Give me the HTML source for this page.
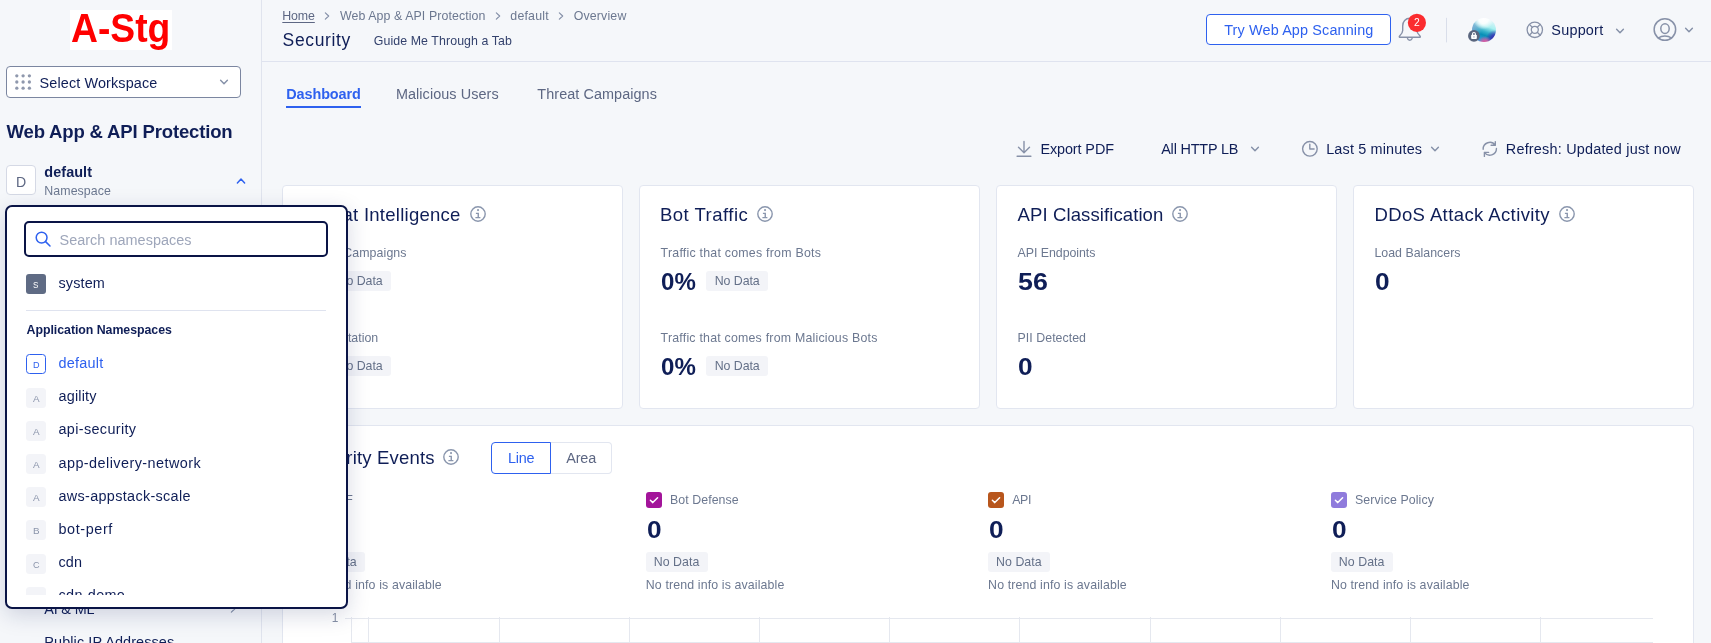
<!DOCTYPE html>
<html lang="en"><head><meta charset="utf-8"><title>Security Dashboard</title>
<style>
*{box-sizing:border-box;margin:0;padding:0}
html,body{width:1711px;height:643px;overflow:hidden;background:#f5f7fa;font-family:"Liberation Sans",sans-serif;}
.a{position:absolute;display:block}
.t{position:absolute;white-space:nowrap;display:block}
.layer{position:absolute;left:0;top:0;width:1711px;height:643px;overflow:hidden;will-change:transform}
.card{position:absolute;background:#fff;border:1px solid #e2e6f0;border-radius:4px}
.nd{background:#f3f4f8;border-radius:3px}
.nsb{position:absolute;width:19.8px;height:19.7px;border-radius:3.5px;background:#f3f4f8}
</style></head><body>

<main class="layer">
<div class="a" style="left:286px;top:106px;width:75px;height:2px;background:#2e61ef"></div>

<svg class="a" style="left:1248.8px;top:142.5px" width="12" height="12" viewBox="-6 -6 12 12"><path d="M-3.4 -1.8L0 1.8L3.4 -1.8" fill="none" stroke="#8590a8" stroke-width="1.4" stroke-linecap="round" stroke-linejoin="round"/></svg>

<svg class="a" style="left:1429px;top:142.5px" width="12" height="12" viewBox="-6 -6 12 12"><path d="M-3.4 -1.8L0 1.8L3.4 -1.8" fill="none" stroke="#8590a8" stroke-width="1.4" stroke-linecap="round" stroke-linejoin="round"/></svg>
<svg class="a" style="left:1010px;top:135px" width="500" height="28" viewBox="1010 135 500 28" fill="none" stroke="#8791a8" stroke-width="1.4" stroke-linecap="round" stroke-linejoin="round">
<path d="M1024 141.4V152.6M1018.5 147.2L1024 152.7L1029.5 147.2M1017.1 156.2H1030.9"/>
<circle cx="1309.9" cy="148.85" r="7.3"/><path d="M1309.8 144.2V149H1314.1"/>
<path d="M1483.15 149.3A6.65 6.65 0 0 1 1495.3 145.3M1495.3 141.6V145.3H1491.1"/><path d="M1496.45 148.5A6.65 6.65 0 0 1 1484.4 152.4M1484.4 156.4V152.4H1488.6"/>
</svg>
<div class="card" style="left:282px;top:185px;width:341px;height:224px"></div><div class="card" style="left:639px;top:185px;width:341px;height:224px"></div><div class="card" style="left:996px;top:185px;width:341px;height:224px"></div><div class="card" style="left:1353px;top:185px;width:341px;height:224px"></div>
<div class="card" style="left:282px;top:425px;width:1412px;height:240px"></div>
<div class="a" style="left:550px;top:442px;width:62px;height:32px;border:1px solid #e2e6f0;border-left:none;border-radius:0 4px 4px 0;background:#fff"></div>
<div class="a" style="left:491px;top:442px;width:60px;height:32px;border:1px solid #2e61ef;border-radius:4px 0 0 4px;background:#fff"></div>
<svg class="a" style="left:469.4px;top:204.85px" width="18" height="18" viewBox="-9 -9 18 18"><circle cx="0" cy="0" r="7.2" fill="none" stroke="#8a96ad" stroke-width="1.4"/><circle cx="0.05" cy="-3.9" r="1.05" fill="#8a96ad"/><path d="M-2.1 -0.65H0.25V3.6M-2.6 3.65H2.4" fill="none" stroke="#8a96ad" stroke-width="1.4"/></svg><svg class="a" style="left:755.8px;top:204.85px" width="18" height="18" viewBox="-9 -9 18 18"><circle cx="0" cy="0" r="7.2" fill="none" stroke="#8a96ad" stroke-width="1.4"/><circle cx="0.05" cy="-3.9" r="1.05" fill="#8a96ad"/><path d="M-2.1 -0.65H0.25V3.6M-2.6 3.65H2.4" fill="none" stroke="#8a96ad" stroke-width="1.4"/></svg><svg class="a" style="left:1170.8px;top:204.85px" width="18" height="18" viewBox="-9 -9 18 18"><circle cx="0" cy="0" r="7.2" fill="none" stroke="#8a96ad" stroke-width="1.4"/><circle cx="0.05" cy="-3.9" r="1.05" fill="#8a96ad"/><path d="M-2.1 -0.65H0.25V3.6M-2.6 3.65H2.4" fill="none" stroke="#8a96ad" stroke-width="1.4"/></svg><svg class="a" style="left:1557.8px;top:204.85px" width="18" height="18" viewBox="-9 -9 18 18"><circle cx="0" cy="0" r="7.2" fill="none" stroke="#8a96ad" stroke-width="1.4"/><circle cx="0.05" cy="-3.9" r="1.05" fill="#8a96ad"/><path d="M-2.1 -0.65H0.25V3.6M-2.6 3.65H2.4" fill="none" stroke="#8a96ad" stroke-width="1.4"/></svg><svg class="a" style="left:442.2px;top:448.2px" width="18" height="18" viewBox="-9 -9 18 18"><circle cx="0" cy="0" r="7.2" fill="none" stroke="#8a96ad" stroke-width="1.4"/><circle cx="0.05" cy="-3.9" r="1.05" fill="#8a96ad"/><path d="M-2.1 -0.65H0.25V3.6M-2.6 3.65H2.4" fill="none" stroke="#8a96ad" stroke-width="1.4"/></svg><div class="a nd" style="left:329.2px;top:271.2px;width:61.5px;height:19.5px"></div><div class="a nd" style="left:329.2px;top:356.2px;width:61.5px;height:19.5px"></div><div class="a nd" style="left:706.4px;top:271.2px;width:61.5px;height:19.5px"></div><div class="a nd" style="left:706.4px;top:356.2px;width:61.5px;height:19.5px"></div><div class="a nd" style="left:303.4px;top:552px;width:61.5px;height:19.5px"></div><div class="a nd" style="left:646.0px;top:552px;width:61.5px;height:19.5px"></div><div class="a nd" style="left:988.3000000000001px;top:552px;width:61.5px;height:19.5px"></div><div class="a nd" style="left:1331.1000000000001px;top:552px;width:61.5px;height:19.5px"></div><svg class="a" style="left:303.0px;top:492px" width="16" height="16" viewBox="0 0 16 16"><rect x="0" y="0" width="16" height="16" rx="3" fill="#0e5fd8"/><path d="M4.4 8.3l2.4 2.3 4.8-4.9" fill="none" stroke="#fff" stroke-width="1.5" stroke-linecap="round" stroke-linejoin="round"/></svg><svg class="a" style="left:645.5999999999999px;top:492px" width="16" height="16" viewBox="0 0 16 16"><rect x="0" y="0" width="16" height="16" rx="3" fill="#a3149a"/><path d="M4.4 8.3l2.4 2.3 4.8-4.9" fill="none" stroke="#fff" stroke-width="1.5" stroke-linecap="round" stroke-linejoin="round"/></svg><svg class="a" style="left:987.9px;top:492px" width="16" height="16" viewBox="0 0 16 16"><rect x="0" y="0" width="16" height="16" rx="3" fill="#b8561c"/><path d="M4.4 8.3l2.4 2.3 4.8-4.9" fill="none" stroke="#fff" stroke-width="1.5" stroke-linecap="round" stroke-linejoin="round"/></svg><svg class="a" style="left:1330.7px;top:492px" width="16" height="16" viewBox="0 0 16 16"><rect x="0" y="0" width="16" height="16" rx="3" fill="#8f7bdc"/><path d="M4.4 8.3l2.4 2.3 4.8-4.9" fill="none" stroke="#fff" stroke-width="1.5" stroke-linecap="round" stroke-linejoin="round"/></svg>
<div class="a" style="left:345px;top:618px;width:1308px;height:1px;background:#e5e8ef"></div>
<div class="a" style="left:351px;top:617px;width:1px;height:30px;background:#e5e8ef"></div><div class="a" style="left:368px;top:617px;width:1px;height:30px;background:#e5e8ef"></div><div class="a" style="left:499px;top:617px;width:1px;height:30px;background:#e5e8ef"></div><div class="a" style="left:629px;top:617px;width:1px;height:30px;background:#e5e8ef"></div><div class="a" style="left:759px;top:617px;width:1px;height:30px;background:#e5e8ef"></div><div class="a" style="left:889px;top:617px;width:1px;height:30px;background:#e5e8ef"></div><div class="a" style="left:1019px;top:617px;width:1px;height:30px;background:#e5e8ef"></div><div class="a" style="left:1150px;top:617px;width:1px;height:30px;background:#e5e8ef"></div><div class="a" style="left:1280px;top:617px;width:1px;height:30px;background:#e5e8ef"></div><div class="a" style="left:1410px;top:617px;width:1px;height:30px;background:#e5e8ef"></div><div class="a" style="left:1540px;top:617px;width:1px;height:30px;background:#e5e8ef"></div><div class="a" style="left:351px;top:642px;width:1302px;height:1px;background:#e5e8ef"></div>
<span class="t" style="left:286.2px;top:86px;font-size:14.42px;line-height:16px;color:#2e61ef;font-weight:700;letter-spacing:-0.072px;">Dashboard</span>
<span class="t" style="left:395.9px;top:86px;font-size:14.42px;line-height:16px;color:#5d6783;letter-spacing:0.075px;">Malicious Users</span>
<span class="t" style="left:537.3px;top:86px;font-size:14.42px;line-height:16px;color:#5d6783;letter-spacing:0.074px;">Threat Campaigns</span>
<span class="t" style="left:1040.4px;top:141px;font-size:14.42px;line-height:16px;color:#0f1e57;letter-spacing:-0.095px;">Export PDF</span>
<span class="t" style="left:1161.2px;top:141px;font-size:14.42px;line-height:16px;color:#0f1e57;letter-spacing:-0.182px;">All HTTP LB</span>
<span class="t" style="left:1326.2px;top:141px;font-size:14.42px;line-height:16px;color:#0f1e57;letter-spacing:0.164px;">Last 5 minutes</span>
<span class="t" style="left:1505.8px;top:141px;font-size:14.42px;line-height:16px;color:#0f1e57;letter-spacing:0.209px;">Refresh: Updated just now</span>
<span class="t" style="left:303.4px;top:204px;font-size:18.54px;line-height:21px;color:#0f1e57;letter-spacing:0.254px;">Threat Intelligence</span>
<span class="t" style="left:660.0px;top:204px;font-size:18.54px;line-height:21px;color:#0f1e57;letter-spacing:0.464px;">Bot Traffic</span>
<span class="t" style="left:1017.6px;top:204px;font-size:18.54px;line-height:21px;color:#0f1e57;letter-spacing:0.090px;">API Classification</span>
<span class="t" style="left:1374.4px;top:204px;font-size:18.54px;line-height:21px;color:#0f1e57;letter-spacing:0.386px;">DDoS Attack Activity</span>
<span class="t" style="left:303.4px;top:246px;font-size:12.36px;line-height:14px;color:#6c7890;letter-spacing:0.096px;">Threat Campaigns</span>
<span class="t" style="left:303.4px;top:331px;font-size:12.36px;line-height:14px;color:#6c7890;letter-spacing:0.010px;">IP Reputation</span>
<span class="t" style="left:660.6px;top:246px;font-size:12.36px;line-height:14px;color:#6c7890;letter-spacing:0.237px;">Traffic that comes from Bots</span>
<span class="t" style="left:660.6px;top:331px;font-size:12.36px;line-height:14px;color:#6c7890;letter-spacing:0.215px;">Traffic that comes from Malicious Bots</span>
<span class="t" style="left:1017.6px;top:246px;font-size:12.36px;line-height:14px;color:#6c7890;letter-spacing:-0.041px;">API Endpoints</span>
<span class="t" style="left:1017.6px;top:331px;font-size:12.36px;line-height:14px;color:#6c7890;letter-spacing:0.032px;">PII Detected</span>
<span class="t" style="left:1374.4px;top:246px;font-size:12.36px;line-height:14px;color:#6c7890;letter-spacing:0.015px;">Load Balancers</span>
<span class="t" style="left:303.8px;top:268px;font-size:24.72px;line-height:27px;color:#0f1e57;font-weight:700;transform:scaleX(1.0618);transform-origin:0 50%;">0</span>
<span class="t" style="left:303.8px;top:353px;font-size:24.72px;line-height:27px;color:#0f1e57;font-weight:700;transform:scaleX(1.0618);transform-origin:0 50%;">0</span>
<span class="t" style="left:660.6px;top:268px;font-size:24.72px;line-height:27px;color:#0f1e57;font-weight:700;transform:scaleX(0.9739);transform-origin:0 50%;">0%</span>
<span class="t" style="left:660.6px;top:353px;font-size:24.72px;line-height:27px;color:#0f1e57;font-weight:700;transform:scaleX(0.9739);transform-origin:0 50%;">0%</span>
<span class="t" style="left:1017.8px;top:268px;font-size:24.72px;line-height:27px;color:#0f1e57;font-weight:700;transform:scaleX(1.0836);transform-origin:0 50%;">56</span>
<span class="t" style="left:1018px;top:353px;font-size:24.72px;line-height:27px;color:#0f1e57;font-weight:700;transform:scaleX(1.0618);transform-origin:0 50%;">0</span>
<span class="t" style="left:1375px;top:268px;font-size:24.72px;line-height:27px;color:#0f1e57;font-weight:700;transform:scaleX(1.0618);transform-origin:0 50%;">0</span>
<span class="t" style="left:337.59999999999997px;top:274px;font-size:12.36px;line-height:14px;color:#647088;letter-spacing:-0.049px;">No Data</span>
<span class="t" style="left:337.59999999999997px;top:359px;font-size:12.36px;line-height:14px;color:#647088;letter-spacing:-0.049px;">No Data</span>
<span class="t" style="left:714.6999999999999px;top:274px;font-size:12.36px;line-height:14px;color:#647088;letter-spacing:-0.049px;">No Data</span>
<span class="t" style="left:714.6999999999999px;top:359px;font-size:12.36px;line-height:14px;color:#647088;letter-spacing:-0.049px;">No Data</span>
<span class="t" style="left:303.4px;top:447px;font-size:18.54px;line-height:21px;color:#0f1e57;letter-spacing:0.170px;">Security Events</span>
<span class="t" style="left:508px;top:450px;font-size:14.42px;line-height:16px;color:#2e61ef;letter-spacing:-0.237px;">Line</span>
<span class="t" style="left:566.2px;top:450px;font-size:14.42px;line-height:16px;color:#5d6783;letter-spacing:-0.159px;">Area</span>
<span class="t" style="left:327.3px;top:493px;font-size:12.36px;line-height:14px;color:#6c7890;letter-spacing:-0.733px;">WAF</span>
<span class="t" style="left:304.0px;top:516px;font-size:24.72px;line-height:27px;color:#0f1e57;font-weight:700;transform:scaleX(1.0618);transform-origin:0 50%;">0</span>
<span class="t" style="left:311.09999999999997px;top:555px;font-size:12.36px;line-height:14px;color:#647088;letter-spacing:0.051px;">No Data</span>
<span class="t" style="left:303.2px;top:578px;font-size:12.36px;line-height:14px;color:#6c7890;letter-spacing:0.128px;">No trend info is available</span>
<span class="t" style="left:669.9px;top:493px;font-size:12.36px;line-height:14px;color:#6c7890;letter-spacing:0.079px;">Bot Defense</span>
<span class="t" style="left:646.5999999999999px;top:516px;font-size:24.72px;line-height:27px;color:#0f1e57;font-weight:700;transform:scaleX(1.0618);transform-origin:0 50%;">0</span>
<span class="t" style="left:653.6999999999999px;top:555px;font-size:12.36px;line-height:14px;color:#647088;letter-spacing:0.051px;">No Data</span>
<span class="t" style="left:645.8px;top:578px;font-size:12.36px;line-height:14px;color:#6c7890;letter-spacing:0.128px;">No trend info is available</span>
<span class="t" style="left:1012.2px;top:493px;font-size:12.36px;line-height:14px;color:#6c7890;letter-spacing:-0.307px;">API</span>
<span class="t" style="left:988.9px;top:516px;font-size:24.72px;line-height:27px;color:#0f1e57;font-weight:700;transform:scaleX(1.0618);transform-origin:0 50%;">0</span>
<span class="t" style="left:996.0px;top:555px;font-size:12.36px;line-height:14px;color:#647088;letter-spacing:0.051px;">No Data</span>
<span class="t" style="left:988.1px;top:578px;font-size:12.36px;line-height:14px;color:#6c7890;letter-spacing:0.128px;">No trend info is available</span>
<span class="t" style="left:1355.0px;top:493px;font-size:12.36px;line-height:14px;color:#6c7890;letter-spacing:0.098px;">Service Policy</span>
<span class="t" style="left:1331.7px;top:516px;font-size:24.72px;line-height:27px;color:#0f1e57;font-weight:700;transform:scaleX(1.0618);transform-origin:0 50%;">0</span>
<span class="t" style="left:1338.8000000000002px;top:555px;font-size:12.36px;line-height:14px;color:#647088;letter-spacing:0.051px;">No Data</span>
<span class="t" style="left:1330.9px;top:578px;font-size:12.36px;line-height:14px;color:#6c7890;letter-spacing:0.128px;">No trend info is available</span>
<span class="t" style="left:331.8px;top:611px;font-size:11.85px;line-height:14px;color:#8790a6;">1</span>
</main>

<header class="layer" style="height:62px">
<div class="a" style="left:262px;top:61px;width:1449px;height:1px;background:#dfe3ef"></div>
<svg class="a" style="left:321.4px;top:9.8px" width="12" height="12" viewBox="-6 -6 12 12"><path d="M-1.65 -3.1L1.65 0L-1.65 3.1" fill="none" stroke="#8590a8" stroke-width="1.2" stroke-linecap="round" stroke-linejoin="round"/></svg><svg class="a" style="left:491.6px;top:9.8px" width="12" height="12" viewBox="-6 -6 12 12"><path d="M-1.65 -3.1L1.65 0L-1.65 3.1" fill="none" stroke="#8590a8" stroke-width="1.2" stroke-linecap="round" stroke-linejoin="round"/></svg><svg class="a" style="left:555.4px;top:9.8px" width="12" height="12" viewBox="-6 -6 12 12"><path d="M-1.65 -3.1L1.65 0L-1.65 3.1" fill="none" stroke="#8590a8" stroke-width="1.2" stroke-linecap="round" stroke-linejoin="round"/></svg>
<div class="a" style="left:1206px;top:14px;width:185px;height:31px;border:1px solid #2e61ef;border-radius:4px;background:#fff"></div>
<svg class="a" style="left:1390px;top:0px" width="321" height="62" viewBox="1390 0 321 62" fill="none" stroke="#8791a8" stroke-width="1.4" stroke-linecap="round" stroke-linejoin="round">
<path d="M1409.8 18.2C1405.5 18.2 1402.7 21.6 1402.7 25.9V30.6C1402.7 32.9 1401.2 34.6 1399.6 36C1399 36.6 1399.3 37.3 1400.1 37.3H1419.5C1420.3 37.3 1420.6 36.6 1420 36C1418.4 34.6 1416.9 32.9 1416.9 30.6V25.9C1416.9 21.6 1414.1 18.2 1409.8 18.2Z"/>
<path d="M1407.5 38.6C1407.9 39.7 1408.7 40.3 1409.8 40.3C1410.9 40.3 1411.7 39.7 1412.1 38.6"/>
<circle cx="1416.9" cy="22.8" r="9.1" fill="#fb2c2f" stroke="none"/>
<path d="M1446.5 18.2V42" stroke="#d9deea" stroke-width="1"/>
<g stroke-width="1.3"><circle cx="1534.8" cy="29.8" r="7.7"/><circle cx="1534.8" cy="29.8" r="3.5"/><path d="M1529.4 24.4l2.9 2.9M1540.2 24.4l-2.9 2.9M1529.4 35.2l2.9-2.9M1540.2 35.2l-2.9-2.9"/></g>
<g stroke-width="1.5"><circle cx="1664.9" cy="29.5" r="10.75"/><ellipse cx="1665" cy="28.6" rx="4.2" ry="4.9"/><path d="M1658.3 38C1660.2 36.6 1662.4 36 1664.9 36C1667.4 36 1669.6 36.6 1671.5 38"/></g>
</svg>
<div class="a" style="left:1472.1px;top:17.9px;width:24px;height:24px;border-radius:50%;background:radial-gradient(circle at 48% 4%,#ffffff 0%,rgba(255,255,255,.9) 18%,rgba(255,255,255,0) 40%),radial-gradient(circle at 54% 106%,#f0509a 0%,rgba(240,80,154,.75) 12%,rgba(240,80,154,0) 26%),radial-gradient(circle at 94% 86%,#3a2cb2 0%,rgba(58,44,178,.8) 12%,rgba(58,44,178,0) 28%),radial-gradient(circle at -4% 40%,#86add4 0%,rgba(134,173,212,0) 40%),linear-gradient(199deg,#eef6fb 6%,#aaf0f0 36%,#35b0c9 54%,#078fb6 66%,#2b9ad4 82%,#4a90e0 100%)"></div>
<svg class="a" style="left:1468px;top:30px" width="12" height="12" viewBox="0 0 12 12"><circle cx="5.95" cy="5.9" r="5.9" fill="#5a667e"/><rect x="3.15" y="4.7" width="5.7" height="4.3" rx=".9" fill="#fff"/><path d="M4.5 4.9V3.9a1.45 1.45 0 0 1 2.9 0v1" fill="none" stroke="#fff" stroke-width="1.1"/><rect x="5.5" y="6.2" width=".9" height="1.4" fill="#8a94a8"/></svg>
<svg class="a" style="left:1614px;top:25.4px" width="12" height="12" viewBox="-6 -6 12 12"><path d="M-3.4 -1.8L0 1.8L3.4 -1.8" fill="none" stroke="#8590a8" stroke-width="1.4" stroke-linecap="round" stroke-linejoin="round"/></svg>
<svg class="a" style="left:1683px;top:23.5px" width="12" height="12" viewBox="-6 -6 12 12"><path d="M-3.4 -1.8L0 1.8L3.4 -1.8" fill="none" stroke="#8590a8" stroke-width="1.4" stroke-linecap="round" stroke-linejoin="round"/></svg>
<span class="t" style="left:282.3px;top:9px;font-size:12.36px;line-height:14px;color:#5d6783;letter-spacing:-0.117px;text-decoration:underline;text-underline-offset:1.5px;">Home</span>
<span class="t" style="left:339.9px;top:9px;font-size:12.36px;line-height:14px;color:#6c7890;letter-spacing:0.093px;">Web App &amp; API Protection</span>
<span class="t" style="left:510.3px;top:9px;font-size:12.36px;line-height:14px;color:#6c7890;letter-spacing:0.213px;">default</span>
<span class="t" style="left:573.7px;top:9px;font-size:12.36px;line-height:14px;color:#6c7890;letter-spacing:0.161px;">Overview</span>
<span class="t" style="left:282.6px;top:30px;font-size:17.51px;line-height:20px;color:#0f1e57;letter-spacing:0.635px;">Security</span>
<span class="t" style="left:373.8px;top:34px;font-size:12.36px;line-height:14px;color:#34426d;letter-spacing:0.087px;">Guide Me Through a Tab</span>
<span class="t" style="left:1224.2px;top:22px;font-size:14.42px;line-height:16px;color:#2e61ef;letter-spacing:0.138px;">Try Web App Scanning</span>
<span class="t" style="left:1413.9px;top:17px;font-size:10.3px;line-height:11px;color:#ffffff;">2</span>
<span class="t" style="left:1551.3px;top:22px;font-size:14.42px;line-height:16px;color:#0f1e57;letter-spacing:0.233px;">Support</span>
</header>

<aside class="layer" style="width:262px;border-right:1px solid #e0e4ee">
<div class="a" style="left:70.4px;top:9.8px;width:101.4px;height:40.1px;background:#fff"></div>
<div class="a" style="left:6px;top:66px;width:235px;height:32px;background:#fff;border:1px solid #7b86a0;border-radius:4px"></div>
<svg class="a" style="left:15px;top:74.2px" width="17" height="17" viewBox="0 0 17 17" fill="#8f98ad"><circle cx="1.8" cy="1.8" r="1.65"/><circle cx="8.1" cy="1.8" r="1.65"/><circle cx="14.4" cy="1.8" r="1.65"/><circle cx="1.8" cy="8.0" r="1.65"/><circle cx="8.1" cy="8.0" r="1.65"/><circle cx="14.4" cy="8.0" r="1.65"/><circle cx="1.8" cy="14.2" r="1.65"/><circle cx="8.1" cy="14.2" r="1.65"/><circle cx="14.4" cy="14.2" r="1.65"/></svg>
<svg class="a" style="left:218.2px;top:75.7px" width="12" height="12" viewBox="-6 -6 12 12"><path d="M-3.4 -1.8L0 1.8L3.4 -1.8" fill="none" stroke="#8590a8" stroke-width="1.4" stroke-linecap="round" stroke-linejoin="round"/></svg>
<div class="a" style="left:6px;top:165px;width:30px;height:30px;background:#fff;border:1px solid #d5d9e5;border-radius:4px"></div>
<svg class="a" style="left:235.1px;top:174.5px" width="12" height="12" viewBox="-6 -6 12 12"><path d="M-3.6 1.9L0 -1.9L3.6 1.9" fill="none" stroke="#2e61ef" stroke-width="1.5" stroke-linecap="round" stroke-linejoin="round"/></svg>
<svg class="a" style="left:227px;top:603px" width="12" height="12" viewBox="-6 -6 12 12"><path d="M-1.65 -3.1L1.65 0L-1.65 3.1" fill="none" stroke="#8590a8" stroke-width="1.2" stroke-linecap="round" stroke-linejoin="round"/></svg>
<span class="t" style="left:70.9px;top:6px;font-size:40.07px;line-height:44px;color:#ff0000;font-weight:700;transform:scaleX(0.9306);transform-origin:0 50%;">A-Stg</span>
<span class="t" style="left:39.6px;top:75px;font-size:14.42px;line-height:16px;color:#0f1e57;letter-spacing:0.122px;">Select Workspace</span>
<span class="t" style="left:6.5px;top:121px;font-size:18.54px;line-height:21px;color:#0f1e57;font-weight:700;letter-spacing:-0.164px;">Web App &amp; API Protection</span>
<span class="t" style="left:15.9px;top:173px;font-size:15.45px;line-height:17px;color:#5d6783;transform:scaleX(0.9143);transform-origin:0 50%;">D</span>
<span class="t" style="left:44.3px;top:164px;font-size:14.42px;line-height:16px;color:#0f1e57;font-weight:700;letter-spacing:0.081px;">default</span>
<span class="t" style="left:44.3px;top:184px;font-size:12.36px;line-height:14px;color:#6c7890;letter-spacing:0.083px;">Namespace</span>
<span class="t" style="left:44.3px;top:601px;font-size:14.42px;line-height:16px;color:#0f1e57;letter-spacing:-0.179px;">AI &amp; ML</span>
<span class="t" style="left:44.3px;top:634px;font-size:14.42px;line-height:16px;color:#0f1e57;letter-spacing:0.112px;">Public IP Addresses</span>
</aside>

<div class="a" style="left:4.5px;top:205.4px;width:343.6px;height:403.5px;background:#fff;border:2.2px solid #0a1446;border-radius:7px;box-shadow:0 6px 22px rgba(15,30,87,.17)"></div>
<div class="layer" style="width:347px">
<div class="a" style="left:24px;top:221px;width:304px;height:36px;border:2px solid #0a1446;border-radius:5px;background:#fff"></div>
<svg class="a" style="left:34px;top:230px" width="18" height="18" viewBox="0 0 18 18" fill="none" stroke="#2e61ef" stroke-width="1.5" stroke-linecap="round"><circle cx="7.6" cy="7.6" r="5.4"/><path d="M11.6 11.6l4.4 4.4"/></svg>
<div class="a" style="left:26px;top:274.3px;width:20px;height:19.6px;border-radius:3px;background:#5f6b84"></div>
<div class="a" style="left:26px;top:310px;width:300px;height:1px;background:#dfe3ef"></div>
<span class="t" style="left:59.5px;top:232px;font-size:14.42px;line-height:16px;color:#9ea6ba;letter-spacing:0.044px;">Search namespaces</span>
<span class="t" style="left:33.4px;top:279px;font-size:9.89px;line-height:11px;color:#ffffff;transform:scaleX(0.8190);transform-origin:0 50%;">S</span>
<span class="t" style="left:58.5px;top:275px;font-size:14.42px;line-height:16px;color:#0f1e57;letter-spacing:0.146px;">system</span>
<span class="t" style="left:26.6px;top:323px;font-size:12.36px;line-height:14px;color:#0f1e57;font-weight:700;letter-spacing:-0.051px;">Application Namespaces</span>
</div>
<div class="layer" style="width:347px;height:595px">
<div class="nsb" style="left:26px;top:354.0px;background:#fff;border:1px solid #2e61ef;"></div><div class="nsb" style="left:26px;top:388.0px;"></div><div class="nsb" style="left:26px;top:421.0px;"></div><div class="nsb" style="left:26px;top:454.0px;"></div><div class="nsb" style="left:26px;top:487.0px;"></div><div class="nsb" style="left:26px;top:520.0px;"></div><div class="nsb" style="left:26px;top:554.0px;"></div><div class="nsb" style="left:26px;top:587.0px;"></div>
<span class="t" style="left:32.9px;top:359px;font-size:9.89px;line-height:11px;color:#2e61ef;transform:scaleX(0.9243);transform-origin:0 50%;">D</span>
<span class="t" style="left:58.5px;top:355px;font-size:14.42px;line-height:16px;color:#2e61ef;letter-spacing:0.233px;">default</span>
<span class="t" style="left:32.9px;top:393px;font-size:9.89px;line-height:11px;color:#8b95ab;transform:scaleX(1.0009);transform-origin:0 50%;">A</span>
<span class="t" style="left:58.5px;top:388px;font-size:14.42px;line-height:16px;color:#0f1e57;letter-spacing:0.179px;">agility</span>
<span class="t" style="left:32.9px;top:426px;font-size:9.89px;line-height:11px;color:#8b95ab;transform:scaleX(1.0009);transform-origin:0 50%;">A</span>
<span class="t" style="left:58.5px;top:421px;font-size:14.42px;line-height:16px;color:#0f1e57;letter-spacing:0.354px;">api-security</span>
<span class="t" style="left:32.9px;top:459px;font-size:9.89px;line-height:11px;color:#8b95ab;transform:scaleX(1.0009);transform-origin:0 50%;">A</span>
<span class="t" style="left:58.5px;top:455px;font-size:14.42px;line-height:16px;color:#0f1e57;letter-spacing:0.444px;">app-delivery-network</span>
<span class="t" style="left:32.9px;top:492px;font-size:9.89px;line-height:11px;color:#8b95ab;transform:scaleX(1.0009);transform-origin:0 50%;">A</span>
<span class="t" style="left:58.5px;top:488px;font-size:14.42px;line-height:16px;color:#0f1e57;letter-spacing:0.321px;">aws-appstack-scale</span>
<span class="t" style="left:32.9px;top:525px;font-size:9.89px;line-height:11px;color:#8b95ab;transform:scaleX(1.0009);transform-origin:0 50%;">B</span>
<span class="t" style="left:58.5px;top:521px;font-size:14.42px;line-height:16px;color:#0f1e57;letter-spacing:0.593px;">bot-perf</span>
<span class="t" style="left:32.9px;top:559px;font-size:9.89px;line-height:11px;color:#8b95ab;transform:scaleX(0.9243);transform-origin:0 50%;">C</span>
<span class="t" style="left:58.5px;top:554px;font-size:14.42px;line-height:16px;color:#0f1e57;letter-spacing:0.089px;">cdn</span>
<span class="t" style="left:32.9px;top:592px;font-size:9.89px;line-height:11px;color:#8b95ab;transform:scaleX(0.9243);transform-origin:0 50%;">C</span>
<span class="t" style="left:58.5px;top:587px;font-size:14.42px;line-height:16px;color:#0f1e57;letter-spacing:0.330px;">cdn-demo</span>
</div>
</body></html>
